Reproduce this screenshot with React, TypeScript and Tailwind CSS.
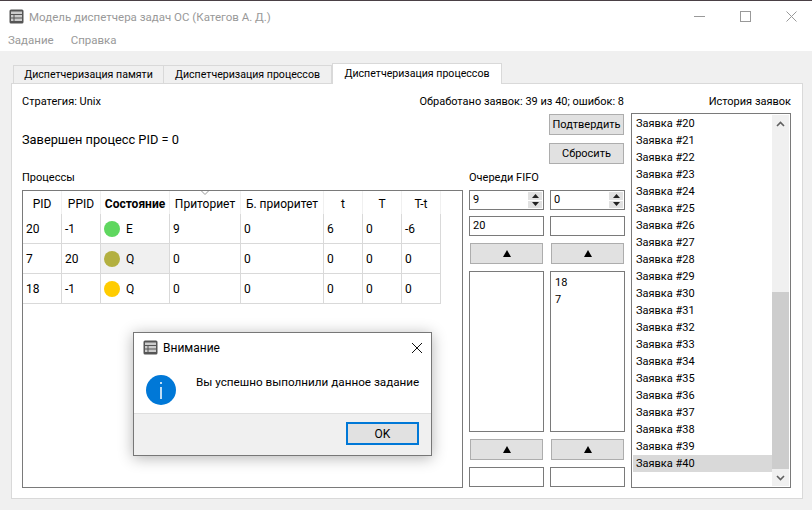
const historyItems = Array.from({ length: 21 }, (_, i) => 20 + i)

const columns = [
  { title: 'PID', width: 'w-[39px]' },
  { title: 'PPID', width: 'w-[39px]' },
  { title: 'Состояние', width: 'w-[69px]', bold: true },
  { title: 'Приториет', width: 'w-[71px]' },
  { title: 'Б. приоритет', width: 'w-[83px]' },
  { title: 't', width: 'w-[39px]' },
  { title: 'T', width: 'w-[39px]' },
  { title: 'T-t', width: 'w-[39px]' },
]

const rows = [
  { pid: '20', ppid: '-1', color: 'bg-[#5fd75f]', state: 'E', prio: '9', base: '0', t: '6', big: '0', diff: '-6' },
  { pid: '7', ppid: '20', color: 'bg-[#b3b040]', state: 'Q', prio: '0', base: '0', t: '0', big: '0', diff: '0', current: true },
  { pid: '18', ppid: '-1', color: 'bg-[#ffcc00]', state: 'Q', prio: '0', base: '0', t: '0', big: '0', diff: '0' },
]

const AppIcon = () => (
  <svg width="15" height="15" viewBox="0 0 15 15" className="shrink-0">
    <rect x="0.5" y="0.5" width="14" height="14" rx="1.5" fill="#555" />
    <rect x="2" y="2.5" width="11" height="2.5" fill="#ccc" />
    <rect x="2" y="6" width="2.5" height="2.5" fill="#ccc" />
    <rect x="5.5" y="6" width="7.5" height="2.5" fill="#ccc" />
    <rect x="2" y="9.5" width="2.5" height="2.5" fill="#ccc" />
    <rect x="5.5" y="9.5" width="7.5" height="2.5" fill="#ccc" />
  </svg>
)

const Cell = ({ children, className = '' }: { children?: React.ReactNode; className?: string }) => (
  <td className={`border-r border-b border-[#d9d9d9] pl-[3px] p-0 align-middle ${className}`}>{children}</td>
)

const SpinBox = ({ value }: { value: string }) => (
  <div className="flex h-[20px] items-center justify-between border border-[#7a7a7a] bg-white pl-[3px] pr-[1px]">
    <span>{value}</span>
    <div className="flex h-[16px] w-[14px] flex-col gap-[1px]">
      <div className="flex flex-1 items-center justify-center bg-[#e1e1e1]">
        <svg width="7" height="4" viewBox="0 0 7 4"><path d="M3.5 0 7 4H0Z" fill="#222" /></svg>
      </div>
      <div className="flex flex-1 items-center justify-center bg-[#e1e1e1]">
        <svg width="7" height="4" viewBox="0 0 7 4"><path d="M0 0H7L3.5 4Z" fill="#222" /></svg>
      </div>
    </div>
  </div>
)

const TextBox = ({ value = '' }: { value?: string }) => (
  <div className="flex h-[20px] items-center border border-[#7a7a7a] bg-white pl-[3px]">{value}</div>
)

const ArrowButton = () => (
  <div className="mx-[1px] flex h-[21px] items-center justify-center border border-[#adadad] bg-[#e1e1e1]">
    <svg width="8" height="7" viewBox="0 0 8 7"><path d="M4 0 8 7H0Z" fill="#000" /></svg>
  </div>
)

const QueueColumn = ({ spin, input, items }: { spin: string; input?: string; items: string[] }) => (
  <div className="flex w-[75px] flex-col">
    <SpinBox value={spin} />
    <div className="mt-[6px]"><TextBox value={input} /></div>
    <div className="mt-[7px]"><ArrowButton /></div>
    <div className="mt-[7px] h-[161px] border border-[#7a7a7a] bg-white pl-[4px] pt-[2px] leading-[17px]">
      {items.map((item) => (
        <div key={item}>{item}</div>
      ))}
    </div>
    <div className="mt-[7px]"><ArrowButton /></div>
    <div className="mt-[7px]"><TextBox /></div>
  </div>
)

export default function App() {
  return (
    <div className="relative flex h-[510px] w-[812px] flex-col overflow-hidden whitespace-nowrap bg-white text-[11px] leading-[16px] text-black [font-family:Roboto,'Noto_Sans',sans-serif]">
      <div className="h-[1px] bg-[#4a4045]" />
      <div className="flex h-[31px] items-center pl-[9px] text-[11.5px] text-[#999999]">
        <AppIcon />
        <span className="ml-[5px]">Модель диспетчера задач ОС (Категов А. Д.)</span>
        <div className="ml-auto flex items-center gap-[35px] pr-[15px]">
          <svg width="11" height="11" viewBox="0 0 11 11"><path d="M0 5.5H11" stroke="#999" /></svg>
          <svg width="11" height="11" viewBox="0 0 11 11"><rect x="0.5" y="0.5" width="10" height="10" fill="none" stroke="#999" /></svg>
          <svg width="11" height="11" viewBox="0 0 11 11"><path d="M0.5 0.5 10.5 10.5M10.5 0.5 0.5 10.5" stroke="#999" /></svg>
        </div>
      </div>
      <div className="flex h-[19px] items-start gap-[17px] pl-[8px] text-[11.5px] text-[#999999]">
        <span>Задание</span>
        <span>Справка</span>
      </div>

      <div className="flex flex-1 flex-col bg-[#f0f0f0] pl-[11px] pr-[9px] pb-[11px] pt-[11px]">
        <div className="flex h-[21px] items-end pl-[2px] text-[10.6px]">
          <div className="flex h-[18px] w-[151px] items-center justify-center border border-b-0 border-[#d9d9d9]">Диспетчеризация памяти</div>
          <div className="flex h-[18px] w-[168px] items-center justify-center border border-b-0 border-l-0 border-[#d9d9d9]">Диспетчеризация процессов</div>
          <div className="z-10 -mb-[1px] flex h-[21px] w-[170px] items-center justify-center border border-b-0 border-[#d9d9d9] bg-white">Диспетчеризация процессов</div>
        </div>

        <div className="flex flex-1 gap-[6px] border border-[#d9d9d9] bg-white pb-[10px] pl-[10px] pr-[10px] pt-[10px]">
          <div className="flex w-[603px] flex-col">
            <div className="flex h-[16px] items-center justify-between">
              <span>Стратегия: Unix</span>
              <span className="mr-[1px]">Обработано заявок: 39 из 40; ошибок: 8</span>
            </div>

            <div className="relative mt-[4px] flex h-[50px] justify-end">
              <span className="absolute left-0 top-[17px] text-[12.8px] leading-[18px]">Завершен процесс PID = 0</span>
              <div className="mr-[1px] flex w-[75px] flex-col gap-[8px]">
                <div className="flex h-[21px] items-center justify-center border border-[#adadad] bg-[#e1e1e1]">Подтвердить</div>
                <div className="flex h-[21px] items-center justify-center border border-[#adadad] bg-[#e1e1e1]">Сбросить</div>
              </div>
            </div>

            <div className="mt-[6px] flex h-[16px] items-center">
              <span className="w-[447px]">Процессы</span>
              <span>Очереди FIFO</span>
            </div>

            <div className="mt-[4px] flex flex-1 gap-[6px]">
              <div className="relative w-[441px] border border-[#7a7a7a] bg-white text-[12px]">
                <svg width="8" height="4" viewBox="0 0 8 4" className="absolute left-[178px] top-0">
                  <path d="M0.5 0 4 3.5 7.5 0" fill="none" stroke="#999" />
                </svg>
                <table className="table-fixed border-separate border-spacing-0">
                  <thead>
                    <tr className="h-[23px]">
                      {columns.map((col) => (
                        <th
                          key={col.title}
                          className={`${col.width} border-r border-[#f0f0f0] p-0 pt-[2px] text-center ${col.bold ? 'font-bold' : 'font-normal'}`}
                        >
                          {col.title}
                        </th>
                      ))}
                    </tr>
                  </thead>
                  <tbody>
                    {rows.map((row) => (
                      <tr key={row.pid} className="h-[30px]">
                        <Cell>{row.pid}</Cell>
                        <Cell>{row.ppid}</Cell>
                        <Cell className={row.current ? 'bg-[#f0f0f0]' : ''}>
                          <div className="flex items-center gap-[6px]">
                            <span className={`h-[16px] w-[16px] rounded-full ${row.color}`} />
                            <span>{row.state}</span>
                          </div>
                        </Cell>
                        <Cell>{row.prio}</Cell>
                        <Cell>{row.base}</Cell>
                        <Cell>{row.t}</Cell>
                        <Cell>{row.big}</Cell>
                        <Cell>{row.diff}</Cell>
                      </tr>
                    ))}
                  </tbody>
                </table>
              </div>
              <QueueColumn spin="9" input="20" items={[]} />
              <QueueColumn spin="0" items={['18', '7']} />
            </div>
          </div>

          <div className="flex w-[160px] flex-col">
            <div className="flex h-[16px] items-center justify-end">История заявок</div>
            <div className="mt-[3px] flex flex-1 border border-[#7a7a7a] bg-white p-[1px]">
              <div className="flex-1 leading-[17px]">
                {historyItems.map((n) => (
                  <div key={n} className={`pl-[3px] ${n === 40 ? 'bg-[#d9d9d9]' : ''}`}>
                    Заявка #{n}
                  </div>
                ))}
              </div>
              <div className="flex w-[17px] flex-col bg-[#f0f0f0]">
                <div className="flex h-[17px] items-center justify-center">
                  <svg width="9" height="6" viewBox="0 0 9 6"><path d="M1 5 4.5 1.5 8 5" fill="none" stroke="#606060" strokeWidth="1.6" /></svg>
                </div>
                <div className="mt-[160px] flex-1 bg-[#cdcdcd]" />
                <div className="flex h-[17px] items-center justify-center">
                  <svg width="9" height="6" viewBox="0 0 9 6"><path d="M1 1 4.5 4.5 8 1" fill="none" stroke="#606060" strokeWidth="1.6" /></svg>
                </div>
              </div>
            </div>
          </div>
        </div>
      </div>

      <div className="absolute left-[133px] top-[332px] flex h-[124px] w-[299px] flex-col border border-[#777777] bg-white text-[11.7px] shadow-[0_2px_14px_rgba(0,0,0,0.3)]">
        <div className="flex h-[29px] items-center pl-[9px] pr-[9px]">
          <AppIcon />
          <span className="ml-[5px] text-[12px]">Внимание</span>
          <svg width="10" height="10" viewBox="0 0 10 10" className="ml-auto">
            <path d="M0 0 10 10M10 0 0 10" stroke="#111" />
          </svg>
        </div>
        <div className="flex flex-1 pl-[12px]">
          <svg width="30" height="30" viewBox="0 0 30 30" className="mt-[13px] shrink-0">
            <circle cx="15" cy="15" r="15" fill="#0078d7" />
            <rect x="14.25" y="12" width="1.5" height="12" fill="#fff" />
            <rect x="14.25" y="7" width="1.5" height="2" fill="#fff" />
          </svg>
          <span className="ml-[20px] mt-[12px]">Вы успешно выполнили данное задание</span>
        </div>
        <div className="flex h-[42px] items-start justify-end border-t border-[#dfdfdf] bg-[#f0f0f0] pr-[12px] pt-[8px]">
          <div className="flex h-[23px] w-[73px] items-center justify-center border-2 border-[#0078d7] bg-[#e1e1e1] text-[12px]">OK</div>
        </div>
      </div>
    </div>
  )
}
